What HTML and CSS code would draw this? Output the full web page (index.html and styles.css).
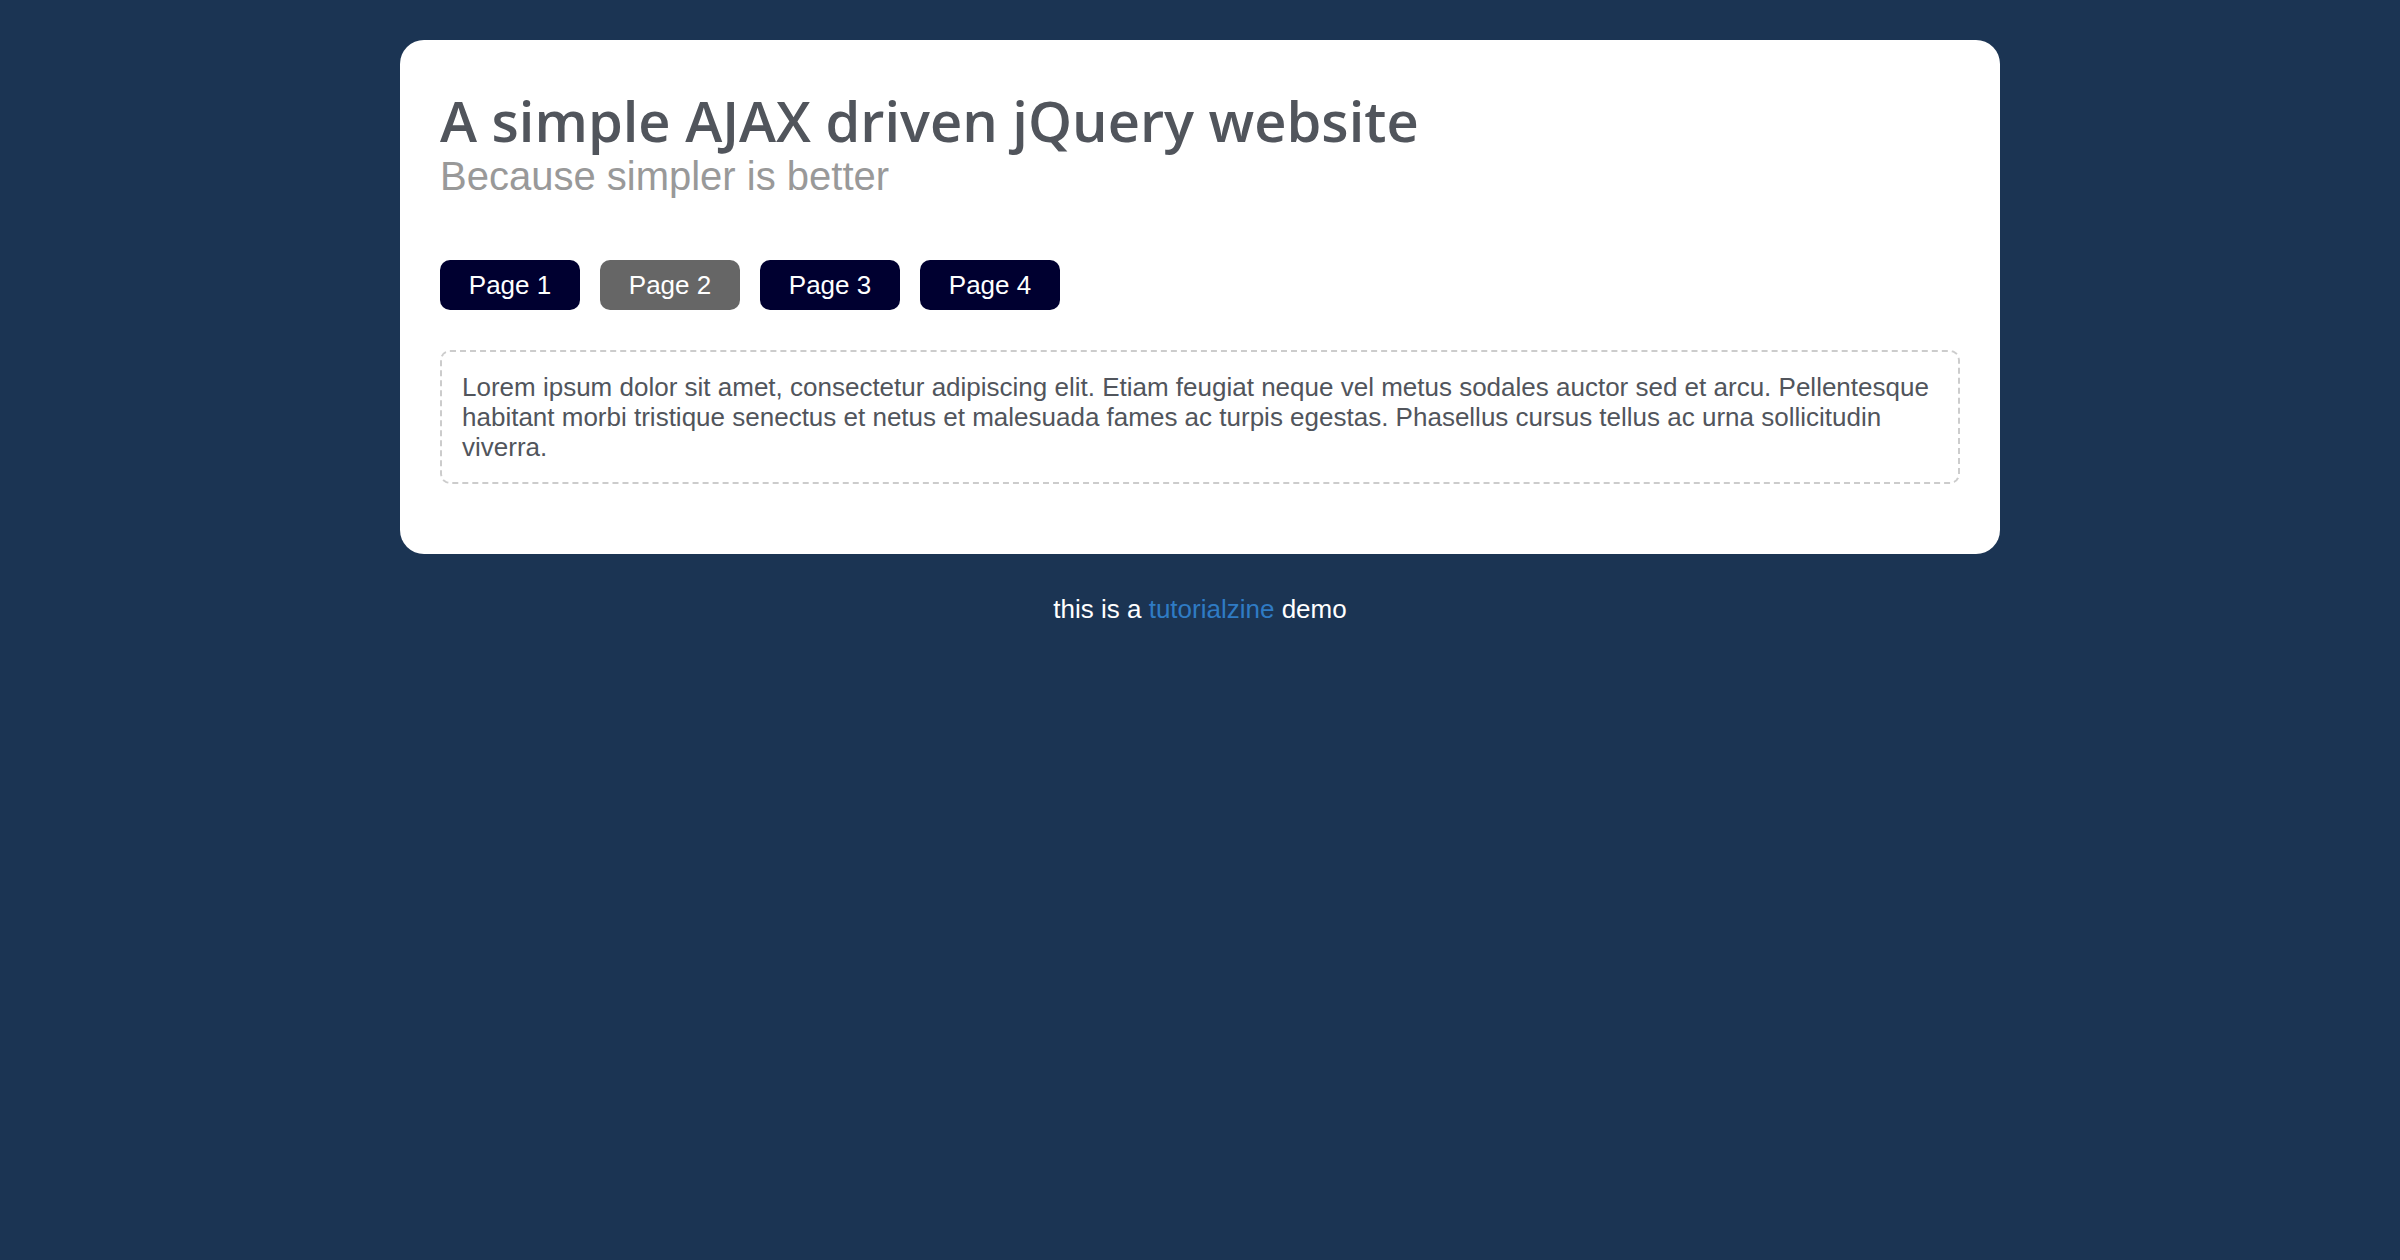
FILE: index.html
```html
<!DOCTYPE html>
<html lang="en">
<head>
<meta charset="utf-8">
<meta name="viewport" content="width=device-width, initial-scale=1">
<title>A simple AJAX driven jQuery website</title>
<link rel="stylesheet" href="styles.css">
</head>
<body>
<main class="card">
  <header class="heading">
    <h1 class="title">A simple AJAX driven jQuery website</h1>
    <h2 class="subtitle">Because simpler is better</h2>
  </header>
  <nav class="navigation" aria-label="Pages">
    <a class="tab" href="#page1">Page 1</a>
    <a class="tab tab-hover" href="#page2">Page 2</a>
    <a class="tab" href="#page3">Page 3</a>
    <a class="tab" href="#page4">Page 4</a>
  </nav>
  <section class="content">
    <p class="text">Lorem ipsum dolor sit amet, consectetur adipiscing elit. Etiam feugiat neque vel metus sodales auctor sed et arcu. Pellentesque habitant morbi tristique senectus et netus et malesuada fames ac turpis egestas. Phasellus cursus tellus ac urna sollicitudin viverra.</p>
  </section>
</main>
<footer class="footer">this is a <a class="credit" href="#tutorialzine">tutorialzine</a> demo</footer>
</body>
</html>
```
FILE: styles.css
```css
* {
  box-sizing: border-box;
  margin: 0;
  padding: 0;
}

body {
  padding: 40px;
  background: #1b3453;
  color: #51555c;
  font: 26px/30px Arial, "Liberation Sans", sans-serif;
}

.card {
  max-width: 1600px;
  margin: 0 auto;
  padding: 48px 40px 70px;
  border-radius: 24px;
  background: #fff;
}

.title {
  font: 600 56px/64px "Trebuchet MS", "Open Sans", sans-serif;
}

.subtitle {
  color: #999;
  font-size: 40px;
  font-weight: normal;
  line-height: 48px;
}

.navigation {
  display: flex;
  flex-wrap: wrap;
  gap: 20px;
  margin: 60px 0 40px;
}

.tab {
  min-width: 140px;
  padding: 10px 28px;
  border-radius: 10px;
  background: #000030;
  color: #fff;
  text-align: center;
  text-decoration: none;
}

.tab-hover,
.tab:hover {
  background: #666;
}

.content {
  padding: 20px;
  border: 2px dashed #ccc;
  border-radius: 10px;
}

.footer {
  margin-top: 40px;
  color: #fff;
  text-align: center;
}

.credit {
  color: #2f7bc4;
  text-decoration: none;
}
```
